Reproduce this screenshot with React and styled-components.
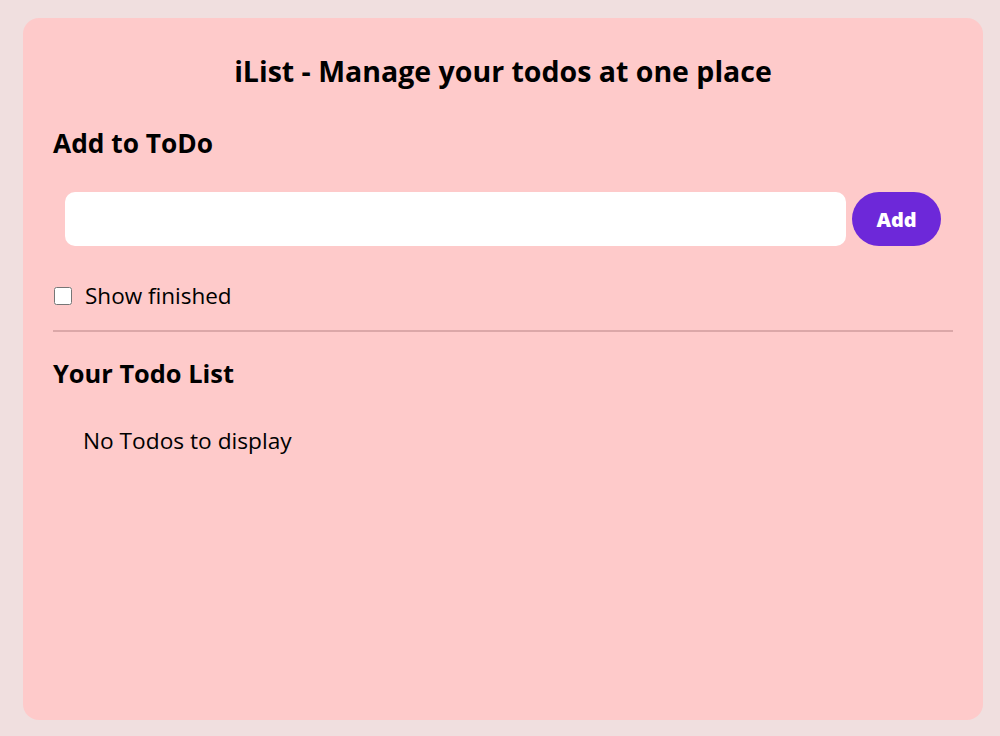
import React, { useState } from 'react';
import styled, { createGlobalStyle } from 'styled-components';

const GlobalStyle = createGlobalStyle`
    * {
        box-sizing: border-box;
    }
    body {
        margin: 0;
        background-color: #f0dfdf;
        font-family: 'Open Sans', 'Noto Sans', sans-serif;
        color: #000;
    }
`;

export default function App() {
    const [todo, setTodo] = useState('');
    const [todos] = useState([]);
    const [showFinished, setShowFinished] = useState(false);

    return (
        <>
            <GlobalStyle />
            <Page>
                <Card>
                    <Title>iList - Manage your todos at one place</Title>
                    <Section>
                        <Heading>Add to ToDo</Heading>
                        <AddRow>
                            <TodoInput
                                type="text"
                                value={todo}
                                onChange={(e) => setTodo(e.target.value)}
                            />
                            <AddButton disabled={todo.length < 1}>Add</AddButton>
                        </AddRow>
                    </Section>
                    <FinishedLabel>
                        <Checkbox
                            type="checkbox"
                            checked={showFinished}
                            onChange={() => setShowFinished(!showFinished)}
                        />
                        Show finished
                    </FinishedLabel>
                    <Divider />
                    <Heading $size="25.4px">Your Todo List</Heading>
                    <Todos>
                        {todos.length === 0 && <Empty>No Todos to display</Empty>}
                    </Todos>
                </Card>
            </Page>
        </>
    );
}

const Page = styled.div`
    padding: 18px 17px 16px 23px;
`;

const Card = styled.div`
    width: 960px;
    min-height: 702px;
    padding: 20px 30px;
    background-color: #fecaca;
    border-radius: 16px;
`;

const Title = styled.h1`
    margin: 13px 0 0;
    text-align: center;
    font-size: 28.5px;
    font-weight: 700;
    line-height: 40px;
`;

const Section = styled.div`
    display: flex;
    flex-direction: column;
    margin-top: 34px;
`;

const Heading = styled.h2`
    margin: 0;
    font-size: ${(p) => p.$size || '26.3px'};
    font-weight: 700;
    line-height: 36px;
`;

const AddRow = styled.div`
    display: flex;
    gap: 6px;
    margin: 31px 12px 0;
`;

const TodoInput = styled.input`
    flex: 1;
    height: 54px;
    padding: 0 12px;
    border: none;
    border-radius: 10px;
    background: #fff;
    font-family: inherit;
    font-size: 20px;
    outline: none;
`;

const AddButton = styled.button`
    width: 89px;
    height: 54px;
    border: none;
    border-radius: 27px;
    background-color: #6d28d9;
    color: #fff;
    font-family: inherit;
    font-size: 20px;
    font-weight: 800;
    cursor: pointer;

    &:disabled {
        background-color: #6d28d9;
        color: #fff;
    }
`;

const FinishedLabel = styled.label`
    display: flex;
    align-items: center;
    gap: 13px;
    margin-top: 35px;
    font-size: 22.5px;
    line-height: 30px;
`;

const Checkbox = styled.input`
    width: 18px;
    height: 18px;
    margin: 0 0 0 1px;
`;

const Divider = styled.div`
    height: 2px;
    margin: 19px 0 23px;
    background-color: #dba7a8;
`;

const Todos = styled.div`
    margin-top: 35px;
`;

const Empty = styled.div`
    margin-left: 30px;
    font-size: 22.7px;
    line-height: 30px;
`;
